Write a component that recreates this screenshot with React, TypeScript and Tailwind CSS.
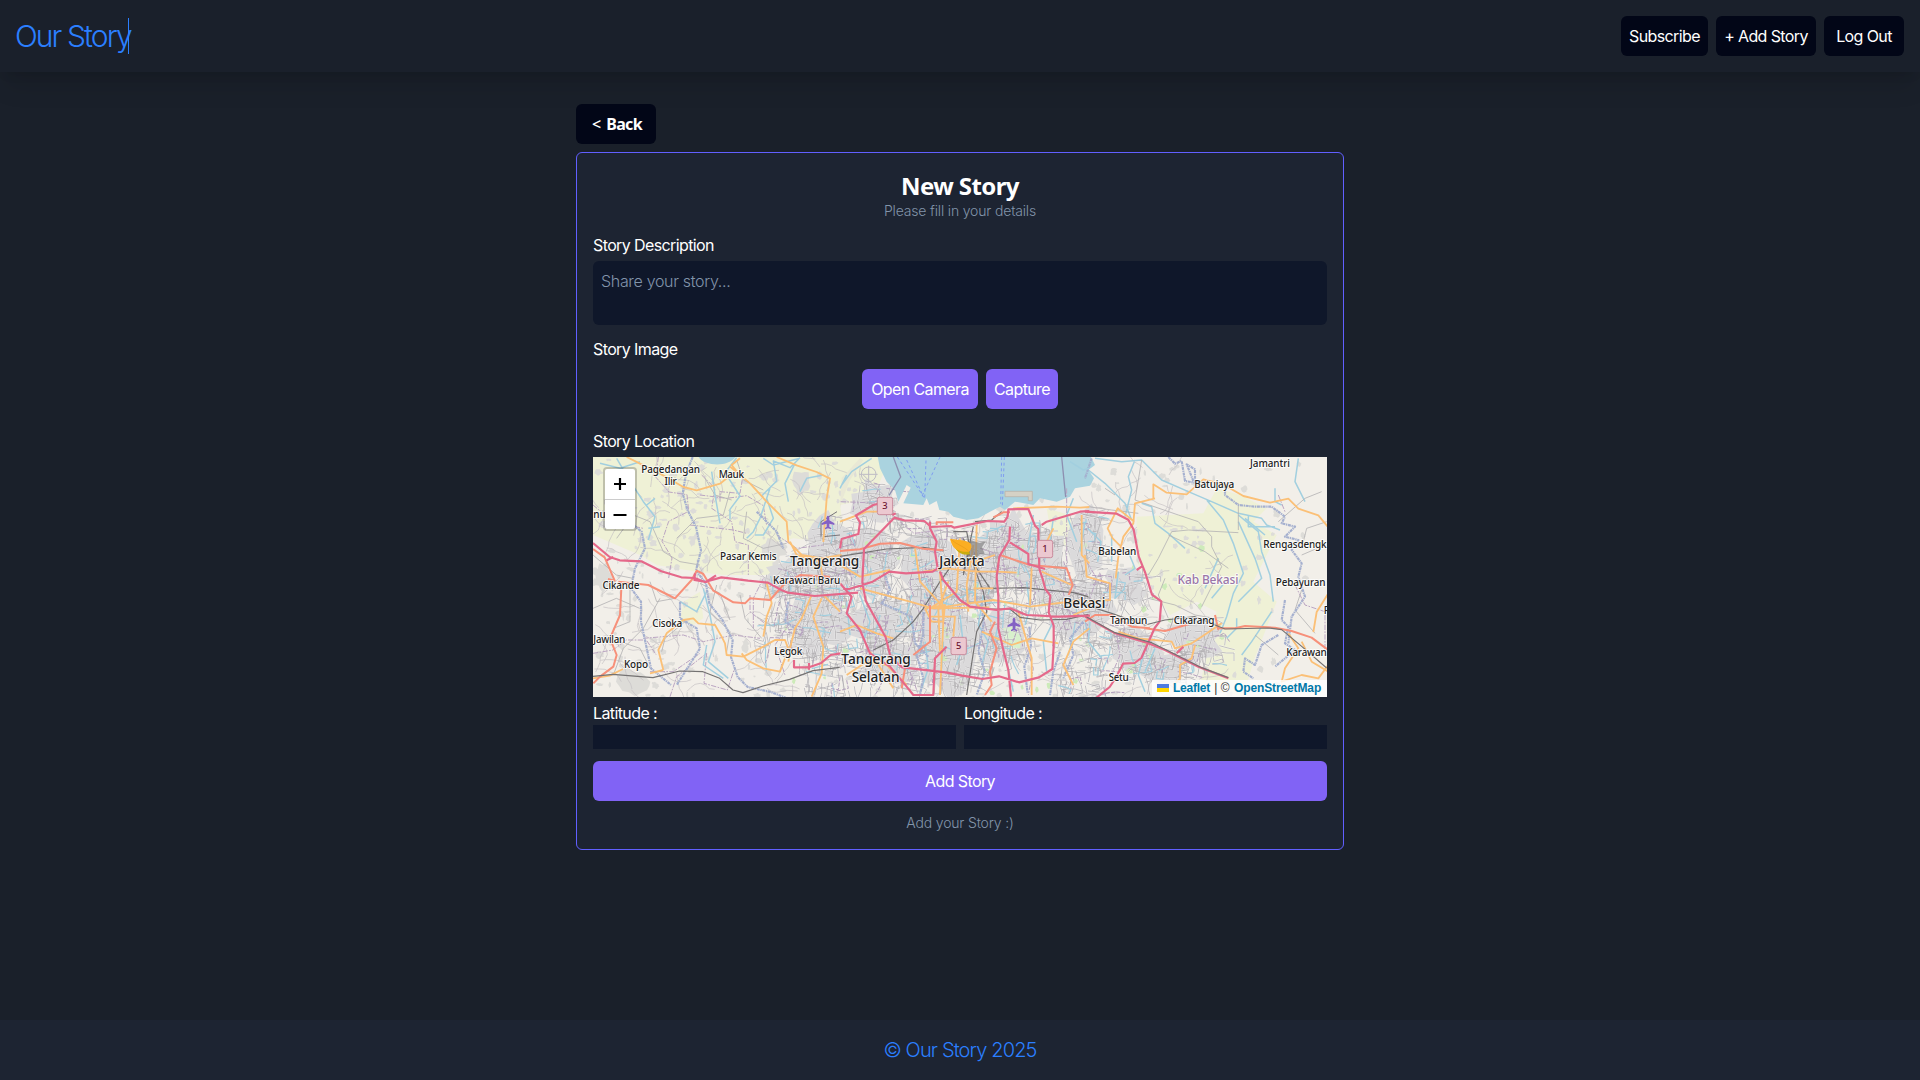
import React from "react";

type Line = { d: string; k: Kind };
type Kind = "motorway" | "trunk" | "primary" | "minor" | "river" | "creek" | "rail" | "admin" | "ferry";

const STROKES: Record<Kind, { stroke: string; width: number; dash?: string }> = {
  motorway: { stroke: "#e5688a", width: 6.5 },
  trunk: { stroke: "#f7907a", width: 6 },
  primary: { stroke: "#fbc077", width: 5.5 },
  minor: { stroke: "#b5b3b5", width: 2.5 },
  river: { stroke: "#a5b0cf", width: 6.5, dash: "9 2 4 2" },
  creek: { stroke: "#a2cfdf", width: 4.5 },
  rail: { stroke: "#747272", width: 3.5 },
  admin: { stroke: "#bba5c2", width: 3, dash: "16 4 5 4" },
  ferry: { stroke: "#7f9df0", width: 3, dash: "9 8" },
};

const westLines: Line[] = [
  { k: "admin", d: "M205 6l-8 60 40 45 54 8 5 50-60 30-20 60 30 50-10 60M330 120l80 10 60-8 50 30 10 60M335 60l40 40-10 60 60 40 10 60 40 10 0 90M9 150l60 50 90 20M160 550l120-10 60 20 90-20 80 10M520 370l-30 60 0 90M585 420l10 90-40 60 30 90M180 650l70 0 80-55M480 420l0 50 50 40M560 240l60 40 80-10" },
  { k: "admin", d: "M240 725l20-60 90-70-8 90 70 20 20-60M390 140l0-30 60 5 10-60M300 210l130 15 40 10M9 595l60-10 40-30 60 0 30 45" },
  { k: "minor", d: "M80 250l50-70 50 20 40 90 50 30 60 10M180 380l20 60 55-10M9 460l70-30 70 30M210 430l-50 90-60 60-30 80M345 70l30 50 50 15M380 390l-20 80 60 60-10 60M450 420l15 70 50 60M120 380l0 120-50 20M330 385l60 30 30 80M420 110l-20 70-80 10-60 60M470 170l-10 80 60 30 70-15M9 300l70 60 50 10M285 500l-60 50-10 40M500 485l50 30 50-25M440 15l20 60 60 30M90 560l60 20 30 60" },
  { k: "creek", d: "M440 8l-35 45 45 70-30 40 0 30M630 8l-30 30-50-20 10 60-45 45M520 10l30 20 80-20M365 50l10 70 15 85M540 100l-30 90-20 40-20 20M530 130l20 60-30 50-25 0M615 25l-30 60 10 55M700 60l-50 10-20 40M80 10l35 60 45 70 35 45-20 70M110 70l-30 15-25-20M170 150l25-20M175 220l35-5M340 400l20 80 15 80-20 60 60 50M270 440l50 30 30-60M350 570l-10 60 60 40M30 25l60 15 60-20" },
  { k: "river", d: "M308 6l-20 50-10 60 15 50 25 50 15 70-15 60 30 40 10 60 40 50 30 60-5 50 20 60 30 30 70 15 50 20 50 60" },
  { k: "river", d: "M105 190l50 40 10 50-30 60-12 60 30 40 0 60 15 70 15 70 60 50M270 440l0 50 50 30 10 60-70 110M500 170l60 60 20 50M595 440l-10 60 30 20" },
  { k: "primary", d: "M110 6l40 20 60 30 70 40 40 10 70-20 50-40M420 35l60 50 50 55 60 60 5 60 40 40 60 10 60-10M560 6l60 25 60 20 40 20-10 60-10 130M450 10l-25 20 20 25M220 645l-15-60 25-50 50-40 30-5 15 15 50 5 20 35 10 20 5 35 50 5 60-30 35-20 30 0 15 40-5 25M455 595l15 20 50 25 50 10 15-40M520 545l10-60 15-40-15-60M665 420l-30 70-20 30-15 60M695 430l-25 55 30 90-5 80-30 70M9 670l50-8 40-20M180 655l40-10M700 420l50 50M600 260l20 40 70 20 10 60" },
  { k: "trunk", d: "M9 282l35 25 30 70-20-5M95 380l-5 100-30 70 20 50-10 35-40 30-20 20M85 380l90 10 60 30 20 10 50-55 15-28 20 10 30 50 60 35 35 3 15-15 60 5 40-45 50-30 90 5" },
  { k: "motorway", d: "M9 264l50 42 30 10 65 3 60 30 60 18 40 2 30 12 50-14 80 10 60 6 40 22 20 8 80 10 130-10M50 316l20-10M315 355l-2 20 35 6 30-20" },
  { k: "motorway", d: "M612 615l0 22 45 0 35-12 30-25 30-5M657 624l0 20" },
  { k: "rail", d: "M9 664l60-6 120 10 80-20 70 2 50 20 40 35 30 8 60-20 80-20 70-26 80-10" },
];

const centralLines: Line[] = [
  { k: "creek", d: "M20 60l-20 40M95 10l-60 40-30 40M20 440l10 100M215 420l-15 60 20 40M255 560l10 80-20 60M430 420l-15 90 30 50-20 70M560 380l10 80-15 50M640 500l-30 60 10 90M60 420l30 80-20 60M500 620l20 90M690 20l40 25 18-5M700 130l-20 50 30 80M735 200l-15 90M640 190l-10 70M580 180l-15 90M360 480l10 90-20 60M310 560l-5 80M480 480l-20 100M120 480l-15 60" },
  { k: "admin", d: "M2 140l130 5 30 40 60 50 90-10M130 350l15 70-40 50 20 50-25 60M220 440l30 50-15 70M420 280l60 20 20 50 50 40M570 520l-10 60 20 60-15 80M680 100l0 240M660 380l30 100-40 60M255 620l-40 40 20 60M420 400l50 60M50 600l-50 40" },
  { k: "river", d: "M130 345l20 60-25 40 90 40 10 80 40 40M250 470l0 70-20 60 20 70-10 50M425 440l5 70-15 80 20 60-25 70M568 515l5 60-20 60 10 80M660 590l-20 60-10 70M730 500l-40 50 10 50-30 70" },
  { k: "ferry", d: "M172 6l40 60 42 65 4-115M300 6l-55 120M200 15l50 110M485 6l-3 140M493 6l-6 145" },
  { k: "minor", d: "M150 190l70 15 70 50-10 40M170 200l30 40 90 10M9 230l80-10 60 20M300 220l10 60M340 230l40 60 5 60M510 230l-20 70 80 40M380 250l40 100 50 20M620 350l-10 90 40 40M170 370l50 80-30 50M10 500l60 30 70-20M530 400l0 90M610 500l-50 60" },
  { k: "rail", d: "M0 304l140-22 110-5 60 10M340 230l40 0 10 50-20 80M400 215l-30 140M370 250l60 160 10 60-30 60-30 190M485 170l-30 25-50 5M390 310l60 90 100-2 150 15 45 12M100 585l60-30 60-55 30-40 50-80 50-70" },
  { k: "primary", d: "M0 200l80-30 40 0M0 330l60 35 90-20M60 400l150 40 70 20 180-25 110 20 160-20M300 350l10 150-10 220M225 280l15 100 60 65M250 350l70-10 90 10 60 0 60 3M325 380l-30 80 5 130M400 270l-20 120 5 80M465 300l-60 20-100 5M360 250l-10 160-80 50M410 210l-5 230 50 60M425 530l90 40 60-20 80 15M520 160l130-5 70 3 28-2M535 470l40 140 0 110M575 340l-5 110M605 350l90 40M640 220l-30 60M725 180l0 120 23 25M700 480l48-20M0 530l50-20 60 25 50 15M20 660l60-40 60 10 60 60M90 590l70 110M400 400l60 0M700 690l-30-60 30-70 48-40M268 460l180-3M310 500l-35 0-20-40 60-10zM270 485l75 0-5 60" },
  { k: "trunk", d: "M0 288l60-5 60-17 60-2 70 17 60 5M290 210l0-8 50 0M460 187l30-15 20 0M480 300l90 30 110 10 18 50-12 30M465 500l-15 30 20 50-20 70 5 40-20 30M270 450l0 110-50 40M195 640l-10 60" },
  { k: "rail", d: "M450 462l60 0 30 25 60 8 80-2 65-15" },
  { k: "motorway", d: "M45 183l55-33 20-5M48 182l12 20-5 35-50 15-5 28M157 180l10-5M163 188l30 8 60 2 20 18 60-3 10 5 100-20 50 2 10-15 2-22 60-1 20 50 10 10 3 120 10 30 8 30 15 20-5 50 15 40 0 60-4 70-40 25-60 15-60-18-50 8-60-10-50-10-130-15-35-30-15-60-60-110-10-55 5-100zM270 200l0 20 20 40-5 30 8 50-15 10-80 5-50-5-50 30-70 22-18 0M300 350l10 25 50 60 30 20 80 10 40-5 50 20 100 5 90-3M0 385l35 40-15 50 40 50 30 70 60 40 50 60 20 25 60 0 5-110 35-35M510 215l-2 40-30 50-8 60 5 60 0 95 15 65 15 60 8 80M510 262l55 35 0 30 50 15M605 210l15-10 100-30 28-2" },
];

const eastLines: Line[] = [
  { k: "creek", d: "M30 10l80 10 60-5 60 60 80 35 70 30 80 35 70 15 15 20 40 15M10 45l50 40 60 60 20 50M150 15l-20 50 10 40-20 80M170 145l30 10 10 50 40 30 50 45M365 135l50 60 30 70 30 90-30 60-20 70-20 50M460 180l60 50 10 60 25 70 10 80M460 200l50 110 20 60-70 70M490 180l0 35 80 0M570 100l0 40 20 10M640 10l-10 70 30 60M8 220l40 40-10 60M100 350l-10 80 30-30M130 290l20 50-30 20M80 240l0 80M180 580l-20 80 20 50M210 580l-30 70M540 240l-60-50M560 470l-60 90-30 40M455 490l0 30-30 30M15 500l-5 60 40 50M400 310l-40 90M430 370l-50 60" },
  { k: "minor", d: "M10 155l70 10 80 10M170 15l-20 120 130 45 60 20 40 45 0 30 30 60-60 120M250 240l110 50 70 50M190 360l30-50 40-80 50-5 150 8M190 430l80 20 60 30 60 10M725 200l-60 20-15 60M20 380l80 20 50 40M460 145l0 80M580 200l80-70 50-20M650 300l70-30M250 490l-30-70 20-50M50 190l-30 100M580 600l-70-60M100 440l50 60M0 560l60 10 80-10M130 640l60 20 50-30M380 520l-30 70 10 70M60 100l30 20M650 405l-20 60 60 70" },
  { k: "river", d: "M250 6l20 20 20-8 10 60 30 5 0-40-25-15 20 50 40 5M420 90l0 30 40 30 50 5 50 0 40 30-10 20 40 10-30 30 40 10-20 30 30 40-10 40 20 60-40 60-10 80M600 435l-10 60 20 20-10 50 30 20-60 50M580 540l-50 30-20 60-30-20-5 40 30 20M20 10l-20 60" },
  { k: "admin", d: "M40 360l40 5 0 50M5 320l30 50-20 60M95 540l10 60-25 60M720 480l0 100-20 20M630 390l30 60 60 20M580 120l20 50" },
  { k: "primary", d: "M205 130l0-42 40 25 60 5 50-45 60 15 60 35 80 20 55-12 30 30 60 20 50 60-5 90 0 60-50 80-10 60M210 130l-60 15-5 60-30 40-15 60-8 65M148 200l-50-40-30 60 15 30 40 40M0 300l5 65 70 20 0 50-75 5M100 530l60 20 100 10 10 20 50-15 30-20 60-40M330 570l-10 40-35 20 0 40-20 20M650 560l30 60 50 30M610 535l30 45-40 60-10 40 60-20 50 10 30-40" },
  { k: "trunk", d: "M180 520l60 8 70-20M400 520l50 0 30-7 90 5 50 10 60 20 40 30 30 20M390 480l10 45M0 500l30-20 50 0 60 35 55 5" },
  { k: "motorway", d: "M0 170l95 6 35 18 16 30 15 80 20 50 20 65 28 20-5 60-15 20-40 90-20 15-35 2-20 40-20 30-74 60M0 485l90 50 100 30 50 20 100 50 90 35M275 595l20-20M155 345l15-10" },
  { k: "rail", d: "M0 450l80 25 100 35 60-15 90-10 60 25 30 12 130-3 40 5 60 50 75 65M0 483l90 50 110 30 70 35 80 40 80 30" },
];

const fields =
  "M9 6L900 6 850 130 750 150 760 220 700 260 610 250 540 270 560 360 400 360 320 350 200 330 150 300 9 240zM1640 185L1840 175 1880 100 1950 120 2030 160 1990 200 2060 240 1990 380 2060 440 1990 620 1960 725 1830 690 1880 470 1820 440 1740 480 1680 390 1640 320zM280 440l50-30 10 80-30 20-40-10zM1370 160l70 20 20 80-30 20-50-60z";

const URBAN: [number, number, number, number][] = [
  [540, 300, 240, 140], [590, 400, 180, 200], [650, 180, 130, 180], [770, 230, 160, 190], [790, 420, 200, 160],
  [810, 550, 180, 150], [930, 190, 160, 250], [980, 400, 190, 300], [1080, 220, 170, 240], [1190, 180, 160, 220],
  [1160, 460, 150, 180], [1310, 220, 120, 250], [1380, 380, 190, 180], [1430, 160, 100, 240], [1560, 520, 150, 130],
  [1740, 480, 150, 150], [1550, 340, 110, 100], [790, 80, 130, 130], [520, 340, 80, 90], [1660, 600, 130, 80],
  [1400, 560, 150, 160], [640, 600, 160, 120], [500, 440, 120, 150],
];

function seeded(seed: number) {
  let s = seed;
  return () => {
    s = (s * 1664525 + 1013904223) % 4294967296;
    return s / 4294967296;
  };
}

function blob(r: () => number, x: number, y: number, w: number, h: number) {
  const n = 16;
  let d = "";
  for (let i = 0; i < n; i++) {
    const a = (i / n) * Math.PI * 2;
    const k = 0.65 + r() * 0.5;
    d += `${i ? "L" : "M"}${(x + w / 2 + (Math.cos(a) * w * k) / 2).toFixed(0)} ${(y + h / 2 + (Math.sin(a) * h * k) / 2).toFixed(0)}`;
  }
  return d + "z";
}

function buildTexture() {
  const r = seeded(41);
  const urban = URBAN.slice(0, 20).map(([x, y, w, h]) => blob(r, x - 8, y - 8, w + 16, h + 16)).join("");
  let villages = "";
  for (let i = 0; i < 700; i++) {
    const x = r() * 2200;
    const y = 10 + r() * 715;
    if (x > 1850 && r() < 0.75) continue;
    villages += blob(r, x, y, 6 + r() * 22, 6 + r() * 20);
  }
  villages += blob(r, 9, 320, 60, 90) + blob(r, 605, 40, 60, 80) + blob(r, 80, 640, 110, 80) + blob(r, 510, 250, 80, 70);
  let streets = "";
  let creeks = "";
  let bounds = "";
  for (const [x, y, w, h] of URBAN) {
    const count = Math.round((w * h) / 430);
    for (let i = 0; i < count; i++) {
      let px = x + r() * w;
      let py = y + r() * h;
      let a = (r() < 0.5 ? 0 : Math.PI / 2) + (r() - 0.5) * 0.7;
      let d = `M${px.toFixed(0)} ${py.toFixed(0)}`;
      const steps = 2 + Math.floor(r() * 3);
      for (let j = 0; j < steps; j++) {
        const len = 10 + r() * 18;
        px += Math.cos(a) * len;
        py += Math.sin(a) * len;
        d += `L${px.toFixed(0)} ${py.toFixed(0)}`;
        a += r() < 0.35 ? Math.PI / 2 : (r() - 0.5) * 0.6;
      }
      if (i % 14 === 0) creeks += d;
      else if (i % 9 === 0) bounds += d;
      else streets += d;
    }
  }
  let rural = "";
  for (let i = 0; i < 300; i++) {
    let px = 9 + r() * 1850;
    let py = 10 + r() * 700;
    if (py < 230 && px > 850 && px < 1500) continue;
    let a = r() * Math.PI * 2;
    rural += `M${px.toFixed(0)} ${py.toFixed(0)}`;
    for (let j = 0; j < 6; j++) {
      px += Math.cos(a) * 16;
      py += Math.sin(a) * 16;
      a += (r() - 0.5) * 1.2;
      rural += `L${px.toFixed(0)} ${py.toFixed(0)}`;
    }
  }
  let greens = "";
  for (let i = 0; i < 60; i++) greens += blob(r, 560 + r() * 1350, 230 + r() * 480, 8 + r() * 14, 8 + r() * 14);
  return { urban, villages, streets, creeks, bounds, rural, greens };
}

const texture = buildTexture();

const labels: { t: string; x: number; y: number; w: number; s: number; c?: string }[] = [
  { t: "Pagedangan", x: 242, y: 54, w: 176, s: 30 },
  { t: "Ilir", x: 242, y: 91, w: 37, s: 30 },
  { t: "Mauk", x: 424, y: 68, w: 76, s: 30 },
  { t: "Pasar Kemis", x: 475, y: 316, w: 170, s: 30 },
  { t: "Cikande", x: 93, y: 403, w: 111, s: 30 },
  { t: "Cisoka", x: 232, y: 517, w: 90, s: 30 },
  { t: "Jawilan", x: 58, y: 565, w: 96, s: 30 },
  { t: "Kopo", x: 138, y: 639, w: 72, s: 30 },
  { t: "Legok", x: 595, y: 599, w: 84, s: 30 },
  { t: "Karawaci Baru", x: 650, y: 387, w: 202, s: 30 },
  { t: "Tangerang", x: 704, y: 332, w: 208, s: 41 },
  { t: "Jakarta", x: 1116, y: 332, w: 136, s: 41 },
  { t: "Tangerang", x: 858, y: 626, w: 208, s: 41 },
  { t: "Selatan", x: 857, y: 680, w: 144, s: 41 },
  { t: "Bekasi", x: 1483, y: 458, w: 126, s: 41 },
  { t: "Jamantri", x: 2040, y: 37, w: 120, s: 30 },
  { t: "Batujaya", x: 1873, y: 100, w: 120, s: 30 },
  { t: "Babelan", x: 1582, y: 300, w: 114, s: 30 },
  { t: "Kab Bekasi", x: 1854, y: 387, w: 183, s: 36, c: "#9a76a8" },
  { t: "Pebayuran", x: 2132, y: 394, w: 149, s: 30 },
  { t: "Tambun", x: 1616, y: 508, w: 112, s: 30 },
  { t: "Cikarang", x: 1812, y: 508, w: 122, s: 30 },
  { t: "Setu", x: 1586, y: 679, w: 60, s: 30 },
];

const edgeLabels = [
  { t: "nu", x: 10, y: 189 },
  { t: "Rengasdengk", x: 2020, y: 278, w: 190 },
  { t: "Karawan", x: 2089, y: 604, w: 121 },
  { t: "R", x: 2201, y: 478 },
];

const shields = [
  { n: "3", x: 885, y: 153 },
  { n: "1", x: 1365, y: 282 },
  { n: "5", x: 1106, y: 573 },
];

const plane = "M0-20c3 0 4 4 4 8v6l15 9v5L4 4v9l5 4v4l-9-3-9 3v-4l5-4V4l-15 4V3l15-9v-6c0-4 1-8 4-8z";

function Lines({ items, dx }: { items: Line[]; dx: number }) {
  return (
    <g transform={`translate(${dx} 0)`} fill="none" strokeLinejoin="round">
      {items.map((l, i) => (
        <path key={i} d={l.d} stroke={STROKES[l.k].stroke} strokeWidth={STROKES[l.k].width} strokeDasharray={STROKES[l.k].dash} />
      ))}
    </g>
  );
}

function MapDrawing() {
  return (
    <svg viewBox="9 6 2202 720" className="block h-60 w-full font-['Noto_Sans',sans-serif] font-medium tracking-normal">
      <rect x="0" y="0" width="2220" height="740" fill="#f2efe9" />
      <path d={fields} fill="#eff1d6" />
      <path d={texture.villages} fill="#dddcd8" />
      <path d={texture.urban} fill="#dbdadb" />
      <path d={texture.greens} fill="#cdebb9" />
      <path d="M1240 520l35-5 20 35-5 30-40 0z" fill="#d8f0cc" />
      <path d={texture.rural} fill="none" stroke="#c4c0c3" strokeWidth="2" />
      <path d={texture.streets} fill="none" stroke="#fff" strokeWidth="5" opacity=".6" />
      <path d={texture.streets} fill="none" stroke="#b0aeb1" strokeWidth="2.3" />
      <path d={texture.creeks} fill="none" stroke="#a2cfdf" strokeWidth="3.5" />
      <path d={texture.bounds} fill="none" stroke="#b39fbd" strokeWidth="3" strokeDasharray="12 4" />
      <path
        d="M862 0L870 40 890 80 915 105 925 140 950 90 962 98 940 145 1000 150 1010 130 1018 150 1040 138 1048 165 1075 170 1090 185 1130 195 1165 190 1200 170 1230 155 1245 165 1275 140 1330 150 1350 130 1400 140 1440 125 1455 100 1500 92 1512 70 1495 45 1515 30 1500 0z"
        fill="#aad3df"
      />
      <path d="M910 6l22 60-35 55M1415 6l12 120" fill="none" stroke="#8e8fb0" strokeWidth="4" />
      <path d="M323 0c10 35 100 40 117 0z" fill="#aad3df" />
      <path d="M1245 109h82v28h-12v-12h-70z" fill="#d5d1c5" stroke="#b7ada4" strokeWidth="2" />
      <path d="M750 160l5-90 55-60 10 5-40 60-20 50z" fill="#e9e8d5" />
      <circle cx="836" cy="58" r="22" fill="none" stroke="#bdbbc4" strokeWidth="3" />
      <path d="M808 58h55M836 32v52M820 60l60 60" fill="none" stroke="#bdbbc4" strokeWidth="3" />
      <path d="M693 245v-45l48-30M700 245l50-5" stroke="#77757a" strokeWidth="3" fill="none" />
      <Lines items={westLines} dx={0} />
      <Lines items={eastLines} dx={1485} />
      <Lines items={centralLines} dx={750} />
      {[[714, 202], [1272, 508]].map(([x, y]) => (
        <path key={x} d={plane} transform={`translate(${x} ${y})`} fill="#8461c4" />
      ))}
      {shields.map((s) => (
        <g key={s.n}>
          <rect x={s.x - 23} y={s.y - 26} width="46" height="52" rx="6" fill="#ecc8d0" stroke="#c98b9c" strokeWidth="3" />
          <text x={s.x} y={s.y + 10} fontSize="28" textAnchor="middle" fill="#6d1430">{s.n}</text>
        </g>
      ))}
      <path d="M1143 256l25 8 20-6-12 18 8 20-14 2-10 10-18-2-12-30z" fill="#777" opacity=".6" />
      <g stroke="#fff" strokeOpacity=".75" strokeWidth="6" strokeLinejoin="round" style={{ paintOrder: "stroke" }}>
        {labels.map((l, i) => (
          <text key={i} x={l.x} y={l.y} fontSize={l.s} textLength={l.w} textAnchor="middle" fill={l.c ?? "#222"}>{l.t}</text>
        ))}
        {edgeLabels.map((l) => (
          <text key={l.t} x={l.x} y={l.y} fontSize="30" textLength={l.w} fill="#222">{l.t}</text>
        ))}
      </g>
      <path d="M1095 278c8 14 22 24 45 20l-6-20-30-4z" fill="#c9ac10" />
      <path d="M1080 251c24 4 52 4 61 14 6 8 4 18-3 25-20 2-42-4-50-18-4-8-6-14-8-21z" fill="#fbae22" />
      <path d="M1084 254c18 16 34 18 52 34" fill="none" stroke="#e99a18" strokeWidth="2" />
    </svg>
  );
}

function StoryMap() {
  return (
    <div className="relative h-60 overflow-hidden">
      <MapDrawing />
      <div className="absolute left-[10px] top-[10px] w-[34px] overflow-hidden rounded border-2 border-black/20 bg-white bg-clip-padding text-black">
        <div className="flex h-[31px] items-center justify-center border-b border-[#ccc]">
          <svg width="14" height="14" viewBox="0 0 14 14"><path d="M7 1v12M1 7h12" stroke="#000" strokeWidth="2.2" /></svg>
        </div>
        <div className="flex h-[29px] items-center justify-center">
          <svg width="14" height="14" viewBox="0 0 14 14"><path d="M.5 7h13" stroke="#000" strokeWidth="2" /></svg>
        </div>
      </div>
      <div className="absolute bottom-0 right-0 flex h-[17px] w-[175px] items-center whitespace-nowrap bg-white/80 pb-px pl-[5px] font-['Liberation_Sans',sans-serif] text-[12px] font-normal tracking-normal text-[#333]">
        <svg className="mr-1 shrink-0" width="12" height="8" viewBox="0 0 12 8"><path fill="#4c7be1" d="M0 0h12v4H0z" /><path fill="#ffd500" d="M0 4h12v4H0z" /></svg>
        <span className="w-[38px] font-bold tracking-[-0.02em] text-[#0078a8]">Leaflet</span>
        <span className="w-[23px] whitespace-pre"> | © </span>
        <span className="font-bold tracking-[-0.01em] text-[#0078a8]">OpenStreetMap</span>
      </div>
    </div>
  );
}

export default function App() {
  return (
    <div className="flex h-screen flex-col bg-[#1a202a] font-['Inter',sans-serif] text-base font-light tracking-[-0.038em] text-white">
      <header className="flex h-[72px] shrink-0 items-center justify-between bg-[#1a202b] px-4 shadow-xl">
        <h1 className="-ml-px h-9 w-[114px] whitespace-nowrap border-r border-[#2b7fff] text-3xl font-light leading-9 tracking-[-0.064em] text-[#2b7fff]">Our Story</h1>
        <nav className="flex gap-2">
          <button className="h-10 w-[87px] rounded-md bg-[#020617] font-normal">Subscribe</button>
          <button className="h-10 w-[100px] rounded-md bg-[#020617] font-normal">+ Add Story</button>
          <button className="h-10 w-20 rounded-md bg-[#020617] font-normal">Log Out</button>
        </nav>
      </header>

      <main className="mx-auto w-3xl grow pt-8">
        <button className="mb-2 flex h-10 w-20 items-center rounded-md bg-[#020617] pl-4 font-['Noto_Sans',sans-serif] text-base tracking-normal">
          <span className="mr-[5px] text-base font-medium">&lt;</span>
          <span className="font-bold tracking-[-0.04em]">Back</span>
        </button>

        <section className="flex flex-col rounded-md border border-[#615fff] bg-[#1d2432] p-4">
          <h2 className="h-8 text-center font-['Noto_Sans',sans-serif] text-2xl font-bold leading-[34px] tracking-tight">New Story</h2>
          <p className="text-center text-sm tracking-[-0.012em] text-[#8294aa]">Please fill in your details</p>

          <label className="mt-3 mb-1 font-normal">Story Description</label>
          <div className="h-16 rounded-md bg-[#0f172a] p-2 tracking-[-0.02em] text-[#8294aa]">Share your story...</div>

          <label className="mt-3 font-normal">Story Image</label>
          <div className="mt-2 flex justify-center gap-2">
            <button className="h-10 w-[116px] rounded-md bg-[#8163f5] font-normal">Open Camera</button>
            <button className="h-10 w-[72px] rounded-md bg-[#8163f5] font-normal">Capture</button>
          </div>

          <label className="mt-5 mb-1 font-normal">Story Location</label>
          <StoryMap />

          <div className="mt-1 flex gap-2">
            <div className="flex-1 font-normal">
              Latitude :<div className="h-6 bg-[#0f172a]" />
            </div>
            <div className="flex-1 font-normal">
              Longitude :<div className="h-6 bg-[#0f172a]" />
            </div>
          </div>
          <button className="mt-3 h-10 rounded-md bg-[#8163f5] font-normal">Add Story</button>
          <p className="mt-3 text-center text-sm tracking-[-0.012em] text-[#8294aa]">Add your Story :)</p>
        </section>
      </main>

      <footer className="flex h-[60px] shrink-0 items-center justify-center bg-[#1d2432] text-xl tracking-[-0.043em] text-[#2b7fff]">© Our Story 2025</footer>
    </div>
  );
}
